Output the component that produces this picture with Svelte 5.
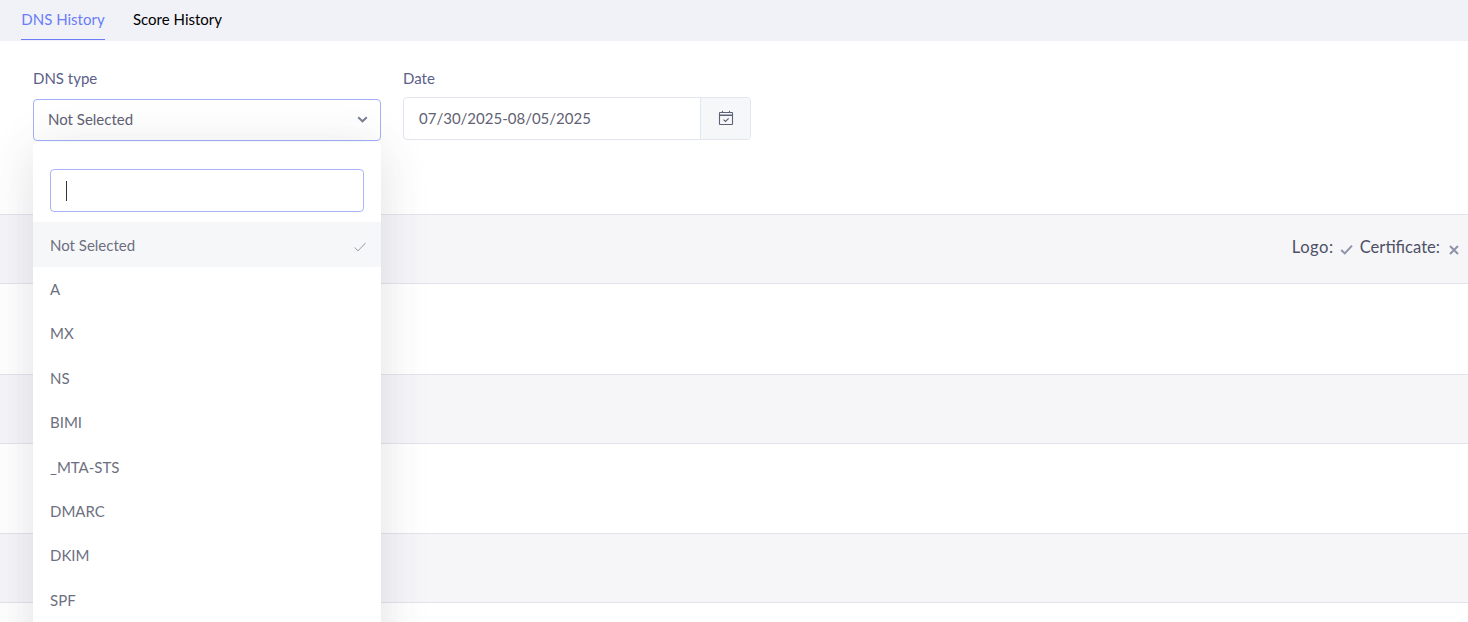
<script>
  const dnsTypes = ['Not Selected', 'A', 'MX', 'NS', 'BIMI', '_MTA-STS', 'DMARC', 'DKIM', 'SPF'];
  const selected = 'Not Selected';

  // three collapsed history rows, only the first has its badges loaded
  const rows = [
    { id: 1, badges: true },
    { id: 2, badges: false },
    { id: 3, badges: false }
  ];
</script>

<div class="page">
  <nav class="tabs">
    <button class="tab active">DNS History</button>
    <button class="tab">Score History</button>
  </nav>

  <div class="filters">
    <div class="field type-field">
      <span class="label">DNS type</span>
      <div class="select">
        <span>{selected}</span>
        <svg class="chevron" width="11" height="7" viewBox="0 0 11 7">
          <path d="M1.2 1.2 5.5 5.3l4.3-4.1" fill="none" stroke="#7d8090" stroke-width="2" />
        </svg>
      </div>

      <div class="menu">
        <div class="search-wrap">
          <div class="search"><span class="caret"></span></div>
        </div>
        {#each dnsTypes as type}
          <div class="option" class:current={type === selected}>
            <span>{type}</span>
            {#if type === selected}
              <svg class="tick" width="12" height="10" viewBox="0 0 12 10">
                <path d="M.7 5.5 4 8.9 11.6.8" fill="none" stroke="#8d8fa0" stroke-width="0.9" />
              </svg>
            {/if}
          </div>
        {/each}
      </div>
    </div>

    <div class="field">
      <span class="label">Date</span>
      <div class="date-group">
        <div class="date-value">07/30/2025-08/05/2025</div>
        <div class="date-addon">
          <svg width="16" height="16" viewBox="0 0 16 16" fill="none" stroke="#5c6078">
            <rect x="1.5" y="2.5" width="13" height="12" rx="0.5" stroke-width="1.1" />
            <path d="M1.5 5.2h13" stroke-width="1.6" />
            <path d="M4.5.8v2M11.5.8v2" stroke-width="1.1" />
            <path d="M5.5 9.6l2 1.9 3.2-3.2" stroke-width="1.2" />
          </svg>
        </div>
      </div>
    </div>
  </div>

  <div class="history">
    {#each rows as row (row.id)}
      <div class="row-head">
        {#if row.badges}
          <span class="logo">Logo:</span>
          <svg class="mark" width="13" height="11" viewBox="0 0 13 11">
            <path d="M1.2 6 4.8 9.4 12 1.6" fill="none" stroke="#9092aa" stroke-width="2" />
          </svg>
          <span class="cert">Certificate:</span>
          <svg class="mark cross" width="10" height="10" viewBox="0 0 10 10">
            <path d="M1 1l8 8M9 1l-8 8" fill="none" stroke="#9092aa" stroke-width="2" />
          </svg>
        {/if}
      </div>
      <div class="row-body"></div>
    {/each}
  </div>
</div>

<style>
  :global(body) {
    margin: 0;
    background: #fff;
  }

  .page {
    height: 622px;
    overflow: hidden;
    font-family: Lato, "Noto Sans", sans-serif;
    font-size: 15px;
    color: #4e5165;
  }

  .tabs {
    display: flex;
    height: 41px;
    padding-left: 21px;
    gap: 28px;
    background: #f1f2f8;
    box-sizing: border-box;
  }

  .tab {
    height: 40px;
    padding: 0 0 2px;
    border: none;
    background: none;
    font: inherit;
    color: #000;
    cursor: pointer;
  }

  .tab.active {
    width: 84px;
    color: #6a7cf7;
    border-bottom: 1px solid #6a7cf7;
  }

  .filters {
    display: flex;
    gap: 22px;
    height: 173px;
    padding: 28px 0 0 33px;
    box-sizing: border-box;
  }

  .field {
    display: flex;
    flex-direction: column;
    position: relative;
  }

  .type-field {
    width: 348px;
  }

  .label {
    height: 30px;
    line-height: 19px;
    color: #5b6088;
  }

  .select {
    display: flex;
    align-items: center;
    justify-content: space-between;
    height: 42px;
    padding: 0 12px 2px 14px;
    box-sizing: border-box;
    border: 1px solid #a3b1fb;
    border-radius: 4px;
    color: #5f6273;
  }

  .menu {
    position: absolute;
    top: 73px;
    left: 0;
    width: 100%;
    height: 520px;
    background: #fff;
    border-radius: 4px;
    box-shadow: 0 8px 48px rgba(60, 60, 90, 0.16);
    z-index: 2;
  }

  .search-wrap {
    padding: 27px 17px 10.4px;
  }

  .search {
    display: flex;
    align-items: center;
    height: 43px;
    padding-left: 15px;
    box-sizing: border-box;
    border: 1px solid #a9b6fb;
    border-radius: 4px;
  }

  .caret {
    width: 1px;
    height: 20px;
    background: #333;
  }

  .option {
    display: flex;
    align-items: center;
    justify-content: space-between;
    height: 44.4px;
    padding: 0 15px 0 17px;
    color: #6d6f80;
  }

  .option.current {
    background: #f6f7f9;
  }

  .tick {
    margin-top: 4px;
  }

  .date-group {
    display: flex;
    width: 348px;
    height: 43px;
    margin-top: -2px;
    box-sizing: border-box;
    border: 1px solid #e3e5ef;
    border-radius: 4px;
    overflow: hidden;
  }

  .date-value {
    flex: 1;
    padding-left: 15px;
    line-height: 41px;
    color: #5f6273;
  }

  .date-addon {
    display: flex;
    align-items: center;
    justify-content: center;
    width: 49px;
    background: #f6f7f9;
    border-left: 1px solid #e3e5ef;
  }

  .date-addon svg {
    margin-top: -2px;
  }

  .row-head {
    display: flex;
    align-items: center;
    justify-content: flex-end;
    gap: 6px;
    height: 70px;
    padding: 0 9px 4px 0;
    box-sizing: border-box;
    background: #f6f6f9;
    border-top: 1px solid #e2e3ec;
    border-bottom: 1px solid #e2e3ec;
    color: #4e5165;
    font-size: 16.6px;
  }

  .logo {
    letter-spacing: 0.5px;
  }

  .mark {
    margin-top: 5px;
  }

  .cert {
    margin-left: 1px;
  }

  .cross {
    margin-left: 3px;
  }

  .row-body {
    height: 89.6px;
  }
</style>
